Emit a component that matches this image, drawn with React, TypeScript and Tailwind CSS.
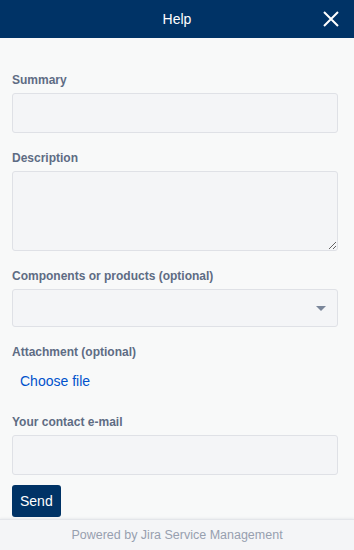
const LABEL = 'block text-[12px] font-bold leading-[16px] text-[#5e6c84]'
const FIELD =
  'block w-full rounded-[3px] border border-[#dfe1e6] bg-[#f4f5f7] px-2 text-[14px] text-[#172b4d] outline-none'

export default function App() {
  return (
    <div className="flex h-[550px] w-[354px] flex-col bg-[#f8f9f9] font-['Liberation_Sans',Arial,sans-serif]">
      <header className="relative flex h-[38px] shrink-0 items-center justify-center bg-[#003366]">
        <h1 className="text-[14px] leading-none text-white">Help</h1>
        <button type="button" aria-label="Close" className="absolute right-[15px] top-[11px] text-white">
          <svg width="16" height="16" viewBox="0 0 16 16" fill="none" stroke="currentColor" strokeWidth="2">
            <path d="M1 1l14 14M15 1L1 15" />
          </svg>
        </button>
      </header>

      <form className="flex flex-1 flex-col pl-3 pr-4 pt-[34px]">
        <label htmlFor="summary" className={LABEL}>
          Summary
        </label>
        <input id="summary" type="text" className={`${FIELD} mt-[5px] h-[40px]`} />

        <label htmlFor="description" className={`${LABEL} mt-[17px]`}>
          Description
        </label>
        <textarea id="description" className={`${FIELD} mt-[5px] h-[80px] resize-y py-2`} />

        <label htmlFor="components" className={`${LABEL} mt-[17px]`}>
          Components or products (optional)
        </label>
        <div className="relative mt-[5px]">
          <div id="components" className={`${FIELD} h-[38px]`} />
          <svg
            className="absolute right-[12px] top-[17px]"
            width="10"
            height="5"
            viewBox="0 0 10 5"
            fill="#7a869a"
          >
            <path d="M0 0h10L5 5z" />
          </svg>
        </div>

        <span className={`${LABEL} mt-[17px]`}>Attachment (optional)</span>
        <div className="mt-[5px] flex h-[32px] items-center">
          <span className="px-2 text-[14px] text-[#0052cc]">Choose file</span>
        </div>

        <label htmlFor="email" className={`${LABEL} mt-[17px]`}>
          Your contact e-mail
        </label>
        <input id="email" type="email" className={`${FIELD} mt-[5px] h-[40px]`} />

        <div className="mt-[10px]">
          <button
            type="button"
            className="h-[32px] rounded-[3px] bg-[#003366] px-2 text-[14px] font-medium leading-none text-white"
          >
            Send
          </button>
        </div>
      </form>

      <footer className="flex h-[31px] shrink-0 items-center justify-center border-t border-[#e4e6ea] bg-[#f4f5f7] shadow-[0_-1px_2px_rgba(9,30,66,0.06)]">
        <span className="text-[12.5px] text-[#97a0af]">Powered by Jira Service Management</span>
      </footer>
    </div>
  )
}
